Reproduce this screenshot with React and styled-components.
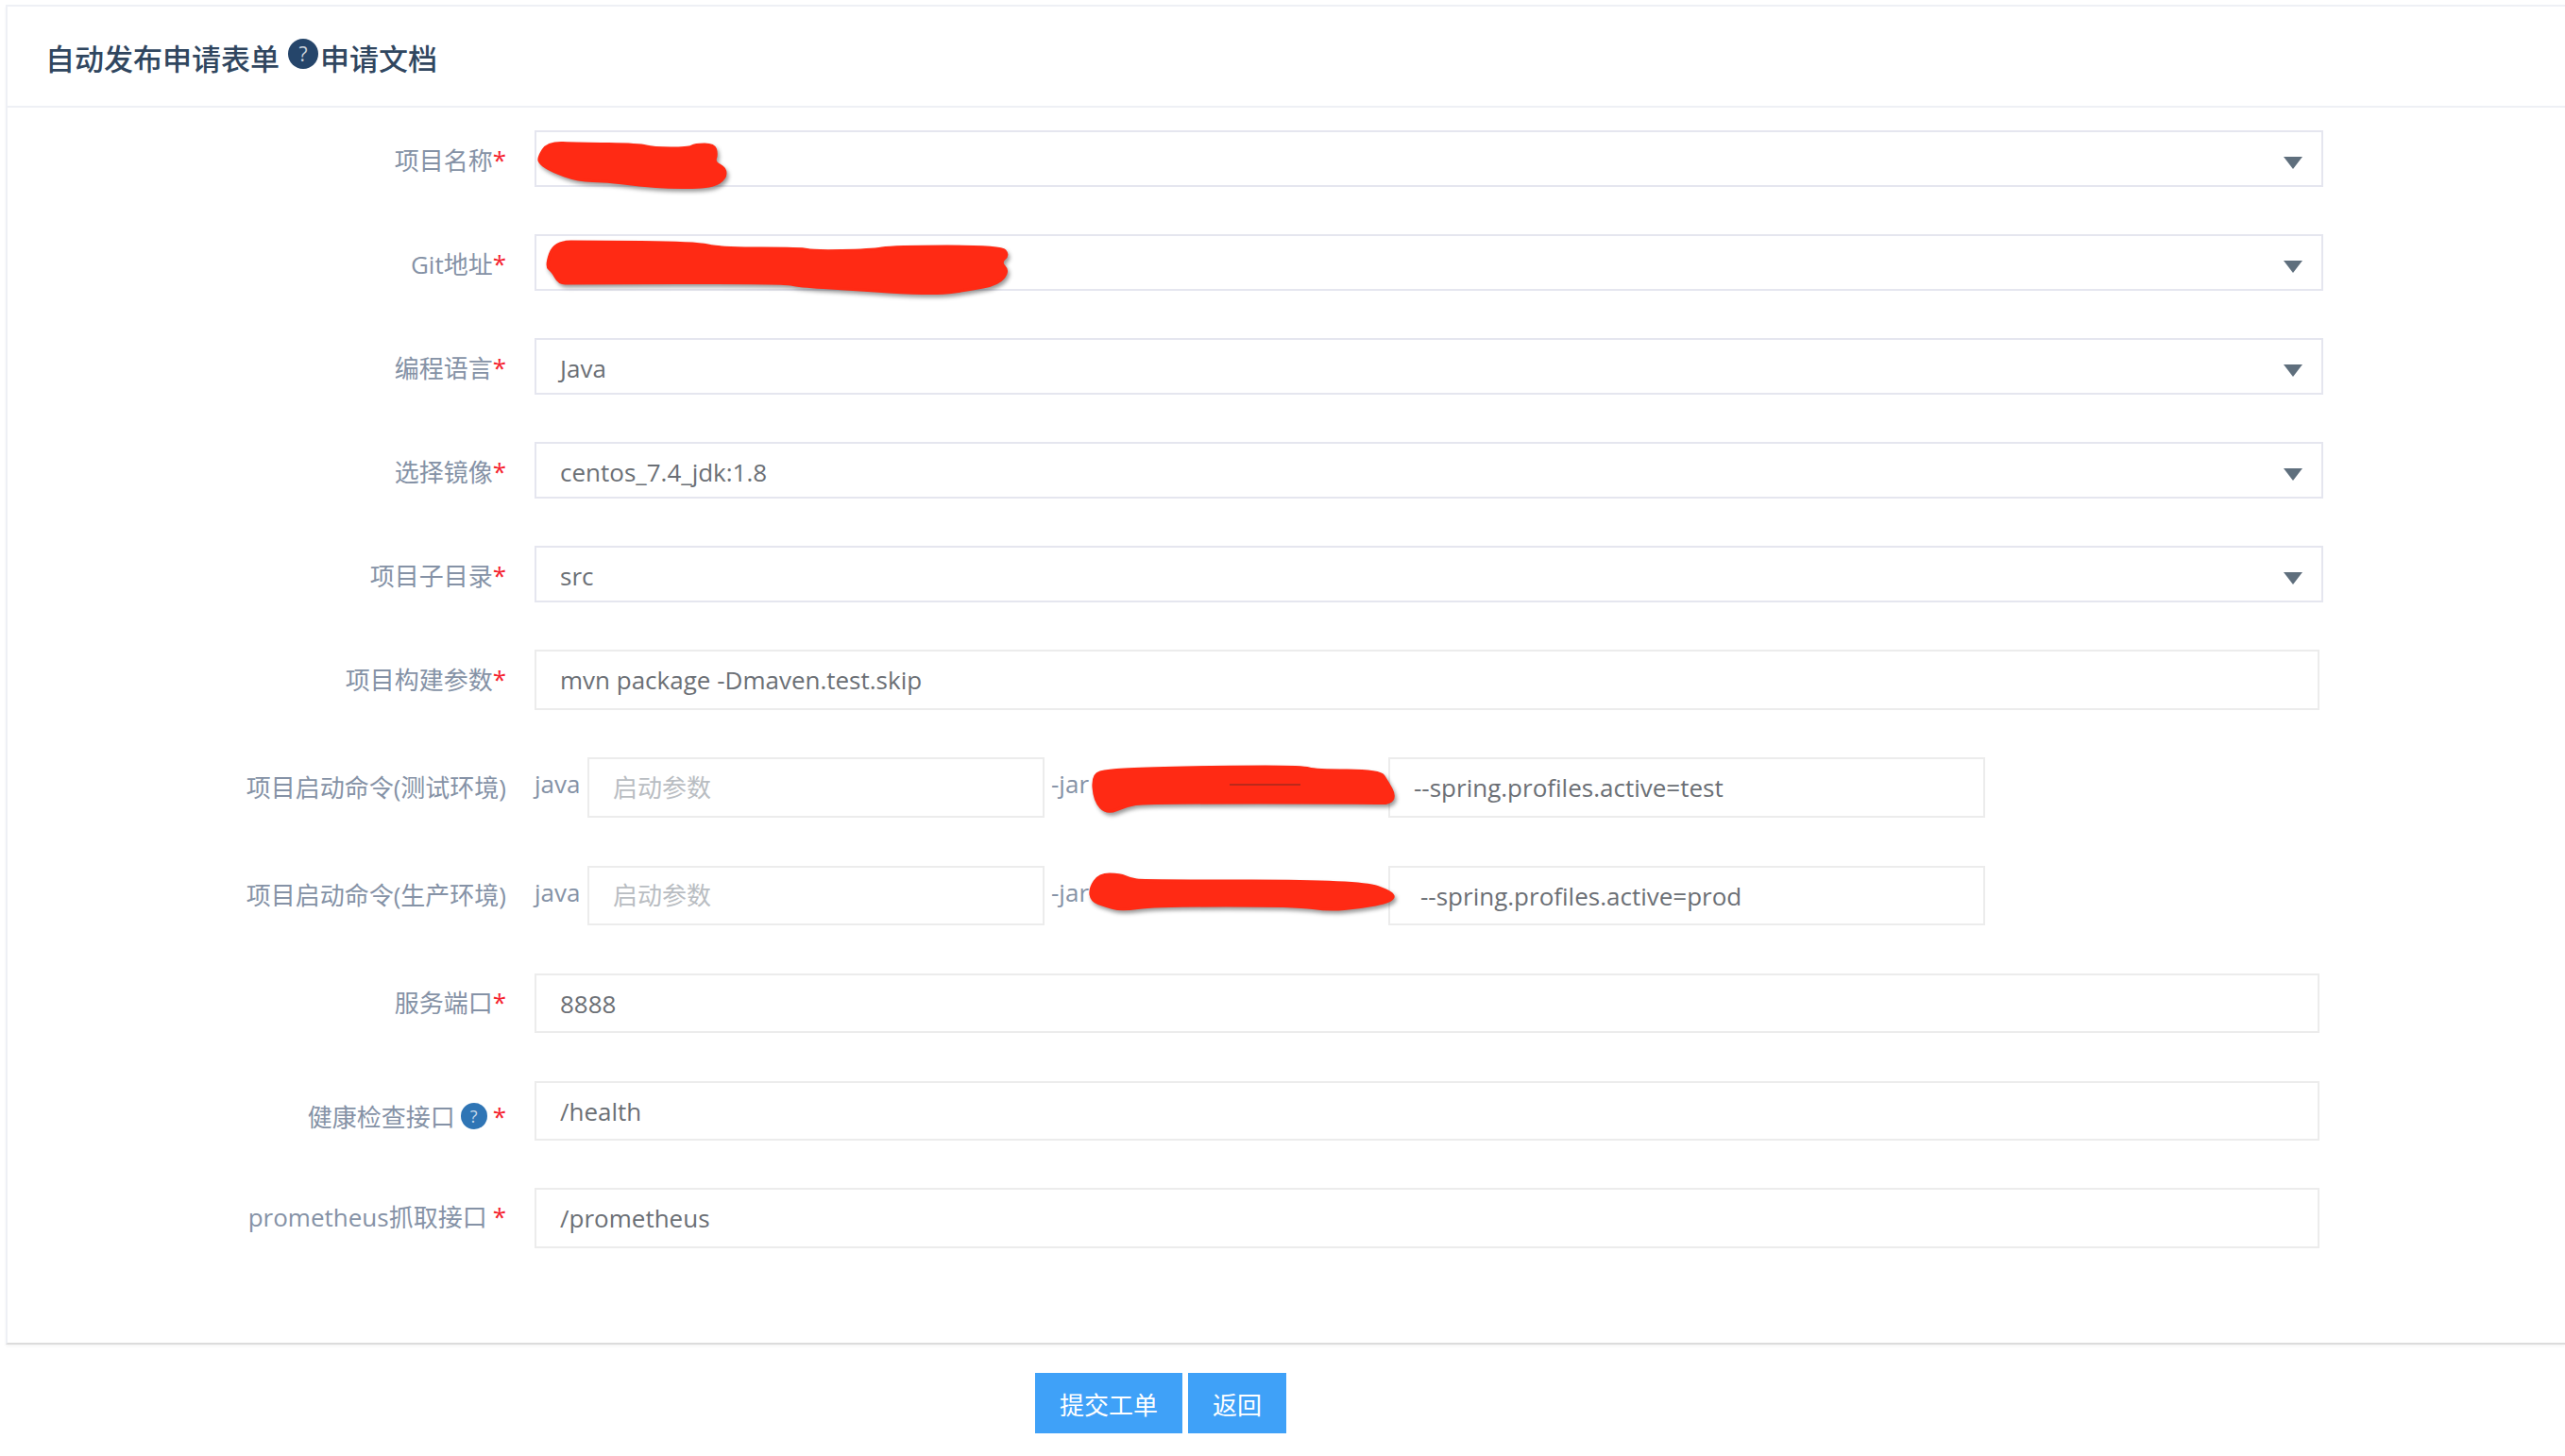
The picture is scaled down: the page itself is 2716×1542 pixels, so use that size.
import styled, { createGlobalStyle } from "styled-components";

const GlobalStyle = createGlobalStyle`
  html, body {
    margin: 0;
    padding: 0;
    background: #fff;
  }
  body {
    font-family: "Open Sans", "Noto Sans CJK SC", sans-serif;
    overflow: hidden;
  }
  * {
    box-sizing: border-box;
  }
`;

const Page = styled.div`
  padding: 5px 0 0 6px;
  height: 1542px;
`;

const Card = styled.section`
  height: 1419px;
  border: 2px solid #eef0f5;
  border-right: none;
  border-bottom: 2px solid #dcdcdc;
  box-shadow: 0 2px 3px rgba(0, 0, 0, 0.04);
`;

const CardHeader = styled.header`
  height: 107px;
  padding: 2px 0 0 40px;
  display: flex;
  align-items: center;
  border-bottom: 2px solid #eef0f5;
  font-size: 31px;
  font-weight: 500;
  color: #30465f;
  font-family: "Noto Sans CJK SC", sans-serif;
`;

const TitleHelp = styled.span`
  width: 32px;
  height: 32px;
  margin: -8px 2px 0 9px;
  border-radius: 50%;
  background: #25456a;
  color: #c9d1db;
  font-size: 21px;
  font-family: "Open Sans", sans-serif;
  font-weight: 400;
  display: flex;
  align-items: center;
  justify-content: center;
`;

const Form = styled.form`
  padding-top: 24px;
  display: flex;
  flex-direction: column;
`;

const Row = styled.div`
  display: flex;
  align-items: center;
  margin-bottom: ${(p) => p.$mb ?? 50}px;
`;

const Label = styled.label`
  width: 528px;
  padding-top: ${(p) => p.$down ?? 0}px;
  padding-bottom: ${(p) => p.$up ?? 0}px;
  margin-right: 30px;
  display: flex;
  justify-content: flex-end;
  align-items: center;
  font-size: 26px;
  color: #8592a6;
  white-space: nowrap;
`;

const Required = styled.span`
  color: #f5222d;
  margin-left: ${(p) => p.$ml ?? 0}px;
`;

const LabelHelp = styled.span`
  width: 28px;
  height: 28px;
  margin: 0 6px 0 6px;
  border-radius: 50%;
  background: #2f75b5;
  color: #c5d8ea;
  font-size: 18px;
  display: flex;
  align-items: center;
  justify-content: center;
`;

const Select = styled.div`
  position: relative;
  width: 1894px;
  height: 60px;
  padding: 3px 20px 0 25px;
  display: flex;
  align-items: center;
  justify-content: space-between;
  border: 2px solid #e5e6ef;
  font-size: 26px;
  color: #6b6f75;
`;

const Caret = styled.i`
  width: 0;
  height: 0;
  border-left: 10px solid transparent;
  border-right: 10px solid transparent;
  border-top: 13px solid #5f6f7d;
  margin-top: 6px;
`;

const Input = styled.div`
  position: relative;
  width: ${(p) => p.$w ?? 1890}px;
  height: ${(p) => p.$h ?? 64}px;
  padding-left: ${(p) => p.$pad ?? 25}px;
  padding-bottom: ${(p) => (p.$placeholder ? 3 : 0)}px;
  display: flex;
  align-items: center;
  flex-shrink: 0;
  border: 2px solid #ececec;
  font-size: 26px;
  color: ${(p) => (p.$placeholder ? "#b9bdc2" : "#6b6f75")};
`;

const Affix = styled.span`
  font-size: 26px;
  color: #8592a6;
  margin-top: -8px;
`;

const JavaAffix = styled(Affix)`
  width: 56px;
`;

const JarAffix = styled(Affix)`
  margin-left: 7px;
  width: 40px;
`;

const JarPath = styled.div`
  position: relative;
  width: 317px;
  height: 60px;
`;

const Blot = styled.svg`
  position: absolute;
  left: ${(p) => p.$left}px;
  top: ${(p) => p.$top}px;
  overflow: visible;
  z-index: 1;
  filter: drop-shadow(2px 3px 2px rgba(0, 0, 0, 0.4));
`;

const Footer = styled.div`
  margin-top: 30px;
  padding-left: 1090px;
  display: flex;
  gap: 6px;
`;

const Button = styled.button`
  height: 64px;
  padding: 0 26px;
  border: none;
  background: #3fa1f8;
  color: #fff;
  font-size: 26px;
  font-family: "Noto Sans CJK SC", sans-serif;
`;

// hand drawn redaction marks, points are in page coordinates
const blots = {
  name: "570,167 580,151 612,152 677,153 691,157 729,157 736,153 756,153 759,163 756,172 768,178 768,189 754,198 712,199 677,196 643,192 612,191 584,181 572,173",
  git: "578,282 587,256 622,256 736,257 763,263 849,263 860,266 922,265 946,261 1060,261 1068,270 1059,278 1068,287 1057,301 1025,307 997,311 956,310 897,306 846,303 829,299 605,300 592,300 585,287",
  test: "1157,820 1173,816 1208,814 1300,812 1380,812 1392,816 1461,816 1469,828 1477,843 1471,851 1453,850 1212,850 1193,853 1172,862 1159,848",
  prod: "1154,940 1164,925 1186,925 1197,930 1210,932 1440,932 1477,945 1473,954 1440,960 1407,963 1373,958 1223,958 1187,963 1170,958 1156,953",
};

// round off the corners so the mark looks like a marker stroke
const smoothPath = (pts) => {
  const mid = (a, b) => [(a[0] + b[0]) / 2, (a[1] + b[1]) / 2];
  const start = mid(pts[pts.length - 1], pts[0]);
  let d = `M${start[0]} ${start[1]}`;
  pts.forEach((p, i) => {
    const m = mid(p, pts[(i + 1) % pts.length]);
    d += ` Q${p[0]} ${p[1]} ${m[0]} ${m[1]}`;
  });
  return d + " Z";
};

const Scribble = ({ points, originX, originY, children }) => {
  const pts = points.split(" ").map((p) => p.split(",").map(Number));
  const minX = Math.min(...pts.map((p) => p[0]));
  const minY = Math.min(...pts.map((p) => p[1]));
  const maxX = Math.max(...pts.map((p) => p[0]));
  const maxY = Math.max(...pts.map((p) => p[1]));
  return (
    <Blot
      $left={minX - originX}
      $top={minY - originY}
      width={maxX - minX}
      height={maxY - minY}
      viewBox={`${minX} ${minY} ${maxX - minX} ${maxY - minY}`}
    >
      <path
        d={smoothPath(pts)}
        fill="#ff2a14"
        stroke="#ff2a14"
        strokeWidth="3"
        strokeLinejoin="round"
      />
      {children}
    </Blot>
  );
};

const Field = ({ label, children, mb, up, down }) => (
  <Row $mb={mb}>
    <Label $up={up} $down={down}>
      {label}
      <Required>*</Required>
    </Label>
    {children}
  </Row>
);

const App = () => {
  return (
    <Page>
      <GlobalStyle />
      <Card>
        <CardHeader>
          自动发布申请表单
          <TitleHelp>?</TitleHelp>
          申请文档
        </CardHeader>
        <Form>
          <Field label="项目名称" down={2}>
            <Select>
              <Scribble points={blots.name} originX={568} originY={140} />
              <span />
              <Caret />
            </Select>
          </Field>
          <Field label="Git地址" down={2}>
            <Select>
              <Scribble points={blots.git} originX={568} originY={250} />
              <span />
              <Caret />
            </Select>
          </Field>
          <Field label="编程语言" down={2}>
            <Select>
              Java
              <Caret />
            </Select>
          </Field>
          <Field label="选择镜像" down={2}>
            <Select>
              centos_7.4_jdk:1.8
              <Caret />
            </Select>
          </Field>
          <Field label="项目子目录" down={2}>
            <Select>
              src
              <Caret />
            </Select>
          </Field>
          <Field label="项目构建参数" up={3}>
            <Input>mvn package -Dmaven.test.skip</Input>
          </Field>
          <Row $mb={51}>
            <Label $up={3}>项目启动命令(测试环境)</Label>
            <JavaAffix>java</JavaAffix>
            <Input $w={484} $placeholder>
              启动参数
            </Input>
            <JarAffix>-jar</JarAffix>
            <JarPath>
              <Scribble points={blots.test} originX={1153} originY={804}>
                <line x1="1302" y1="831" x2="1377" y2="831" stroke="#a52a1c" strokeWidth="1.5" />
              </Scribble>
            </JarPath>
            <Input $w={632}>--spring.profiles.active=test</Input>
          </Row>
          <Row $mb={51}>
            <Label $up={3}>项目启动命令(生产环境)</Label>
            <JavaAffix>java</JavaAffix>
            <Input $w={484} $h={63} $placeholder>
              启动参数
            </Input>
            <JarAffix>-jar</JarAffix>
            <JarPath>
              <Scribble points={blots.prod} originX={1153} originY={918} />
            </JarPath>
            <Input $w={632} $h={63} $pad={32}>
              --spring.profiles.active=prod
            </Input>
          </Row>
          <Field label="服务端口" mb={51} up={3}>
            <Input $h={63}>8888</Input>
          </Field>
          <Row>
            <Label $down={11}>
              健康检查接口
              <LabelHelp>?</LabelHelp>
              <Required>*</Required>
            </Label>
            <Input $h={63}>/health</Input>
          </Row>
          <Row>
            <Label $up={4}>
              prometheus抓取接口
              <Required $ml={6}>*</Required>
            </Label>
            <Input>/prometheus</Input>
          </Row>
        </Form>
      </Card>
      <Footer>
        <Button>提交工单</Button>
        <Button>返回</Button>
      </Footer>
    </Page>
  );
};

export default App;
